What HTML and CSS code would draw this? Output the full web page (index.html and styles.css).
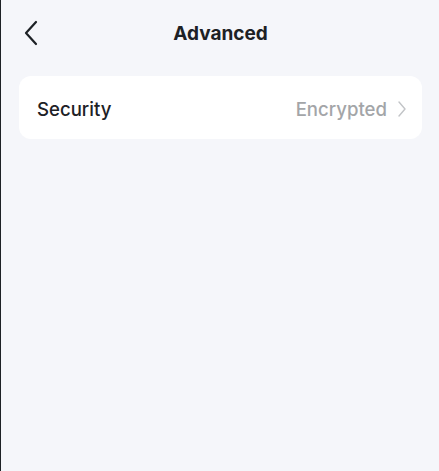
FILE: index.html
```html
<!DOCTYPE html>
<html lang="en">
<head>
<meta charset="UTF-8">
<meta name="viewport" content="width=device-width, initial-scale=1.0">
<title>Advanced</title>
<link rel="stylesheet" href="styles.css">
</head>
<body>

<div class="screen">
    <div class="header">
        <button class="back" aria-label="Back">
            <svg width="16" height="26" viewBox="0 0 16 26">
                <path d="M13 2 L3 13 L13 24" fill="none" stroke="#1d2125" stroke-width="2.2" stroke-linecap="round" stroke-linejoin="round"/>
            </svg>
        </button>
        <h1>Advanced</h1>
    </div>

    <div class="card">
        <div class="row">
            <span class="label">Security</span>
            <span class="value">Encrypted
                <svg width="10" height="18" viewBox="0 0 10 18">
                    <path d="M2 2 L8 9 L2 16" fill="none" stroke="#c2c4c7" stroke-width="1.4" stroke-linecap="round" stroke-linejoin="round"/>
                </svg>
            </span>
        </div>
    </div>
</div>

</body>
</html>
```

FILE: styles.css
```css
body {
    margin: 0;
    padding: 0;
    font-family: Inter, "Noto Sans", sans-serif;
    background-color: #f5f6fa;
}
.screen {
    height: 471px;
    border-left: 1px solid #1d2125;
    box-sizing: border-box;
    padding: 0 17px 0 18px;
}
.header {
    position: relative;
    height: 67px;
    display: flex;
    align-items: center;
    justify-content: center;
}
.header h1 {
    margin: 0;
    font-size: 19px;
    font-weight: 700;
    color: #1d2125;
}
.back {
    position: absolute;
    left: 4px;
    top: 20px;
    padding: 0;
    border: none;
    background: none;
}
.card {
    margin-top: 9px;
    background-color: #fff;
    border-radius: 12px;
}
.row {
    height: 63px;
    display: flex;
    align-items: center;
    justify-content: space-between;
    padding: 2px 15px 0 18px;
    box-sizing: border-box;
}
.label {
    font-size: 18.6px;
    font-weight: 500;
    color: #1d2125;
}
.value {
    display: flex;
    align-items: center;
    gap: 10px;
    font-size: 18.6px;
    font-weight: 500;
    color: #a3a5a8;
}
```
